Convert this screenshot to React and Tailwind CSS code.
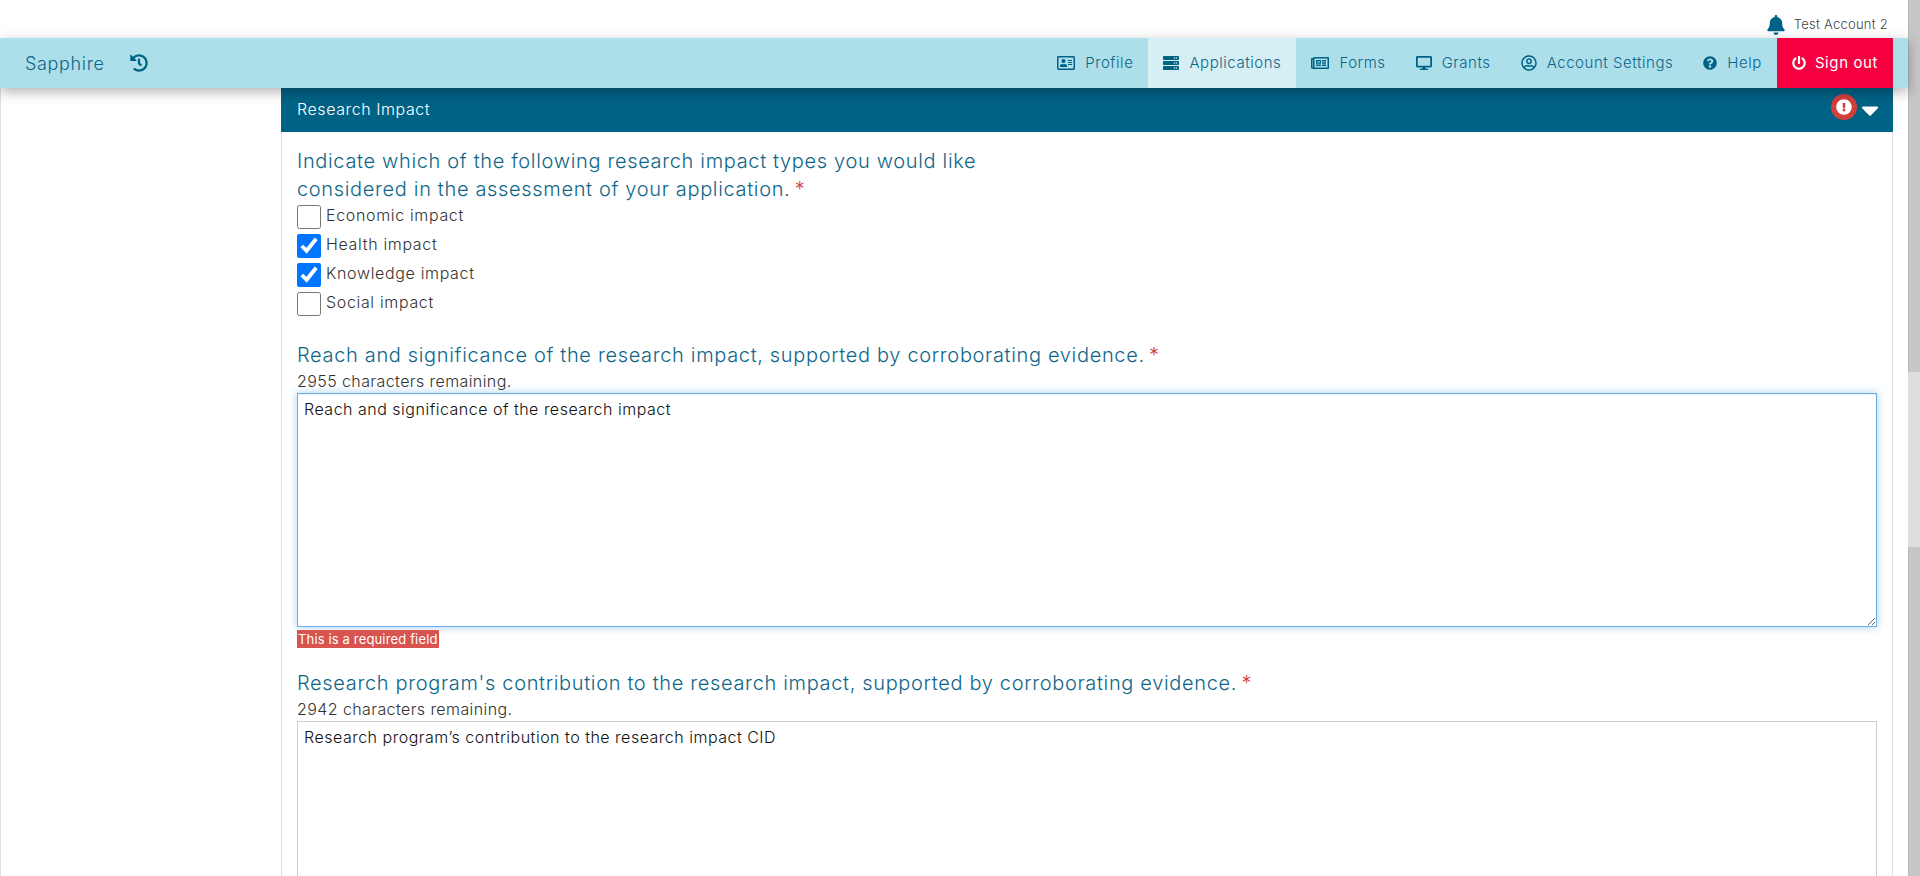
import React from 'react';
import {
  FaBell,
  FaCaretDown,
  FaDesktop,
  FaExclamationCircle,
  FaHistory,
  FaPowerOff,
  FaQuestionCircle,
  FaRegAddressCard,
  FaRegNewspaper,
  FaRegUserCircle,
  FaServer,
} from 'react-icons/fa';

const navItems = [
  { label: 'Profile', icon: FaRegAddressCard, iconClass: 'w-[18px] h-[16px]' },
  { label: 'Applications', icon: FaServer, iconClass: 'w-[16px] h-[16px]', active: true },
  { label: 'Forms', icon: FaRegNewspaper, iconClass: 'w-[18px] h-[16px]' },
  { label: 'Grants', icon: FaDesktop, iconClass: 'w-[16px] h-[16px]' },
  { label: 'Account Settings', icon: FaRegUserCircle, iconClass: 'w-[16px] h-[16px]' },
  { label: 'Help', icon: FaQuestionCircle, iconClass: 'w-[14px] h-[14px]' },
];

const impactTypes = [
  { label: 'Economic impact', checked: false },
  { label: 'Health impact', checked: true },
  { label: 'Knowledge impact', checked: true },
  { label: 'Social impact', checked: false },
];

const Required = () => <span className="-ml-[2px] text-[#d43f3a]"> *</span>;

const Field = ({ label, remaining, value, focused, error }) => (
  <div>
    <div className="text-[20px] font-light leading-[28px] tracking-[0.66px] text-[#0f6688]">
      {label}
      <Required />
    </div>
    <div className="mt-[2px] mb-[2px] text-[16px] font-light leading-[20px] tracking-[0.41px] text-[#333]">
      {remaining} characters remaining.
    </div>
    <textarea
      defaultValue={value}
      className={`block h-[234px] w-full pl-[6px] pr-[5px] py-[4px] text-[16px] font-light leading-[22px] tracking-[0.5px] text-[#111] border outline-none ${
        focused
          ? 'border-[#66afe9] shadow-[inset_0_1px_1px_rgba(0,0,0,0.075),0_0_8px_rgba(102,175,233,0.6)]'
          : 'border-[#ccc]'
      }`}
    />
    {error && (
      <div className="mt-[3px] w-fit bg-[#d9534f] px-px text-[13px] leading-[18px] tracking-[0.15px] text-white">{error}</div>
    )}
  </div>
);

export default function App() {
  return (
    <div className="flex h-screen overflow-hidden bg-white font-['Inter','Open_Sans',sans-serif]">
      <div className="flex min-w-0 flex-1 flex-col">
        {/* Account strip */}
        <div className="flex h-[38px] flex-none items-center justify-end pr-[20px] pt-[12px]">
          <FaBell className="mr-[9px] h-[20px] w-[18px] text-[#006385]" />
          <span className="text-[13px] font-light tracking-[0.25px] text-[#444]">Test Account 2</span>
        </div>

        {/* Main nav */}
        <nav className="relative z-10 flex h-[50px] flex-none items-center bg-[#addfeb] pl-[25px] pr-[15px] shadow-[0_4px_12px_rgba(0,0,0,0.3)]">
          <span className="text-[18px] font-light tracking-[0.65px] text-[#0f6688]">Sapphire</span>
          <FaHistory className="ml-[25px] h-[18px] w-[18px] text-[#006385]" />
          <div className="ml-auto flex h-full">
            {navItems.map(({ label, icon: Icon, iconClass, active }) => (
              <a
                key={label}
                href="#"
                className={`flex items-center gap-[10px] px-[15px] text-[15px] font-light tracking-[0.55px] text-[#0f6688] ${active ? 'bg-[#d5eff5]' : ''}`}
              >
                <Icon className={`${iconClass} text-[#006385]`} />
                {label}
              </a>
            ))}
            <a href="#" className="flex items-center gap-[9px] bg-[#f70041] px-[15px] text-[15px] tracking-[0.6px] text-white">
              <FaPowerOff className="h-[14px] w-[14px]" />
              Sign out
            </a>
          </div>
        </nav>

        {/* Page body */}
        <div className="flex min-h-0 flex-1">
          <div className="w-[281px] flex-none border-l border-[#ddd]" />
          <section className="flex w-[1612px] flex-none flex-col">
            <div className="flex h-[44px] flex-none items-center justify-between bg-[#006285] pl-[16px] pr-[14px] text-white">
              <span className="pb-[2px] text-[16px] font-light tracking-[0.58px]">Research Impact</span>
              <div className="flex items-center gap-[4px]">
                <span className="mb-[6px] flex h-[26px] w-[26px] items-center justify-center rounded-full bg-[#d43f3a]">
                  <FaExclamationCircle className="h-[16px] w-[16px] text-white" />
                </span>
                <FaCaretDown className="h-[28px] w-[18px] text-white" />
              </div>
            </div>
            <div className="flex-1 border-x border-[#ddd] pl-[15px] pr-[15px] pt-[15px]">
              <div className="text-[20px] font-light leading-[28px] tracking-[0.66px] text-[#0f6688]">
                Indicate which of the following research impact types you would like
                <br />
                considered in the assessment of your application.
                <Required />
              </div>
              <div className="mt-[2px] flex flex-col gap-[5px]">
                {impactTypes.map(({ label, checked }) => (
                  <label key={label} className="flex h-[24px] items-start gap-[5px] text-[16px] font-light leading-[20px] tracking-[0.66px] text-[#333]">
                    <input type="checkbox" defaultChecked={checked} className="m-0 h-[24px] w-[24px]" />
                    {label}
                  </label>
                ))}
              </div>
              <div className="mt-[25px]">
                <Field
                  label="Reach and significance of the research impact, supported by corroborating evidence."
                  remaining={2955}
                  value="Reach and significance of the research impact"
                  focused
                  error="This is a required field"
                />
              </div>
              <div className="mt-[21px]">
                <Field
                  label="Research program's contribution to the research impact, supported by corroborating evidence."
                  remaining={2942}
                  value="Research program’s contribution to the research impact CID"
                />
              </div>
            </div>
          </section>
        </div>
      </div>

      {/* Scrollbar */}
      <div className="flex w-[12px] flex-none flex-col">
        <div className="h-[372px] border-l border-[#b8b8b8] bg-[#c6c6c6]" />
        <div className="h-[175px] bg-[#dedede]" />
        <div className="flex-1 border-l border-[#b8b8b8] bg-[#c6c6c6]" />
      </div>
    </div>
  );
}
